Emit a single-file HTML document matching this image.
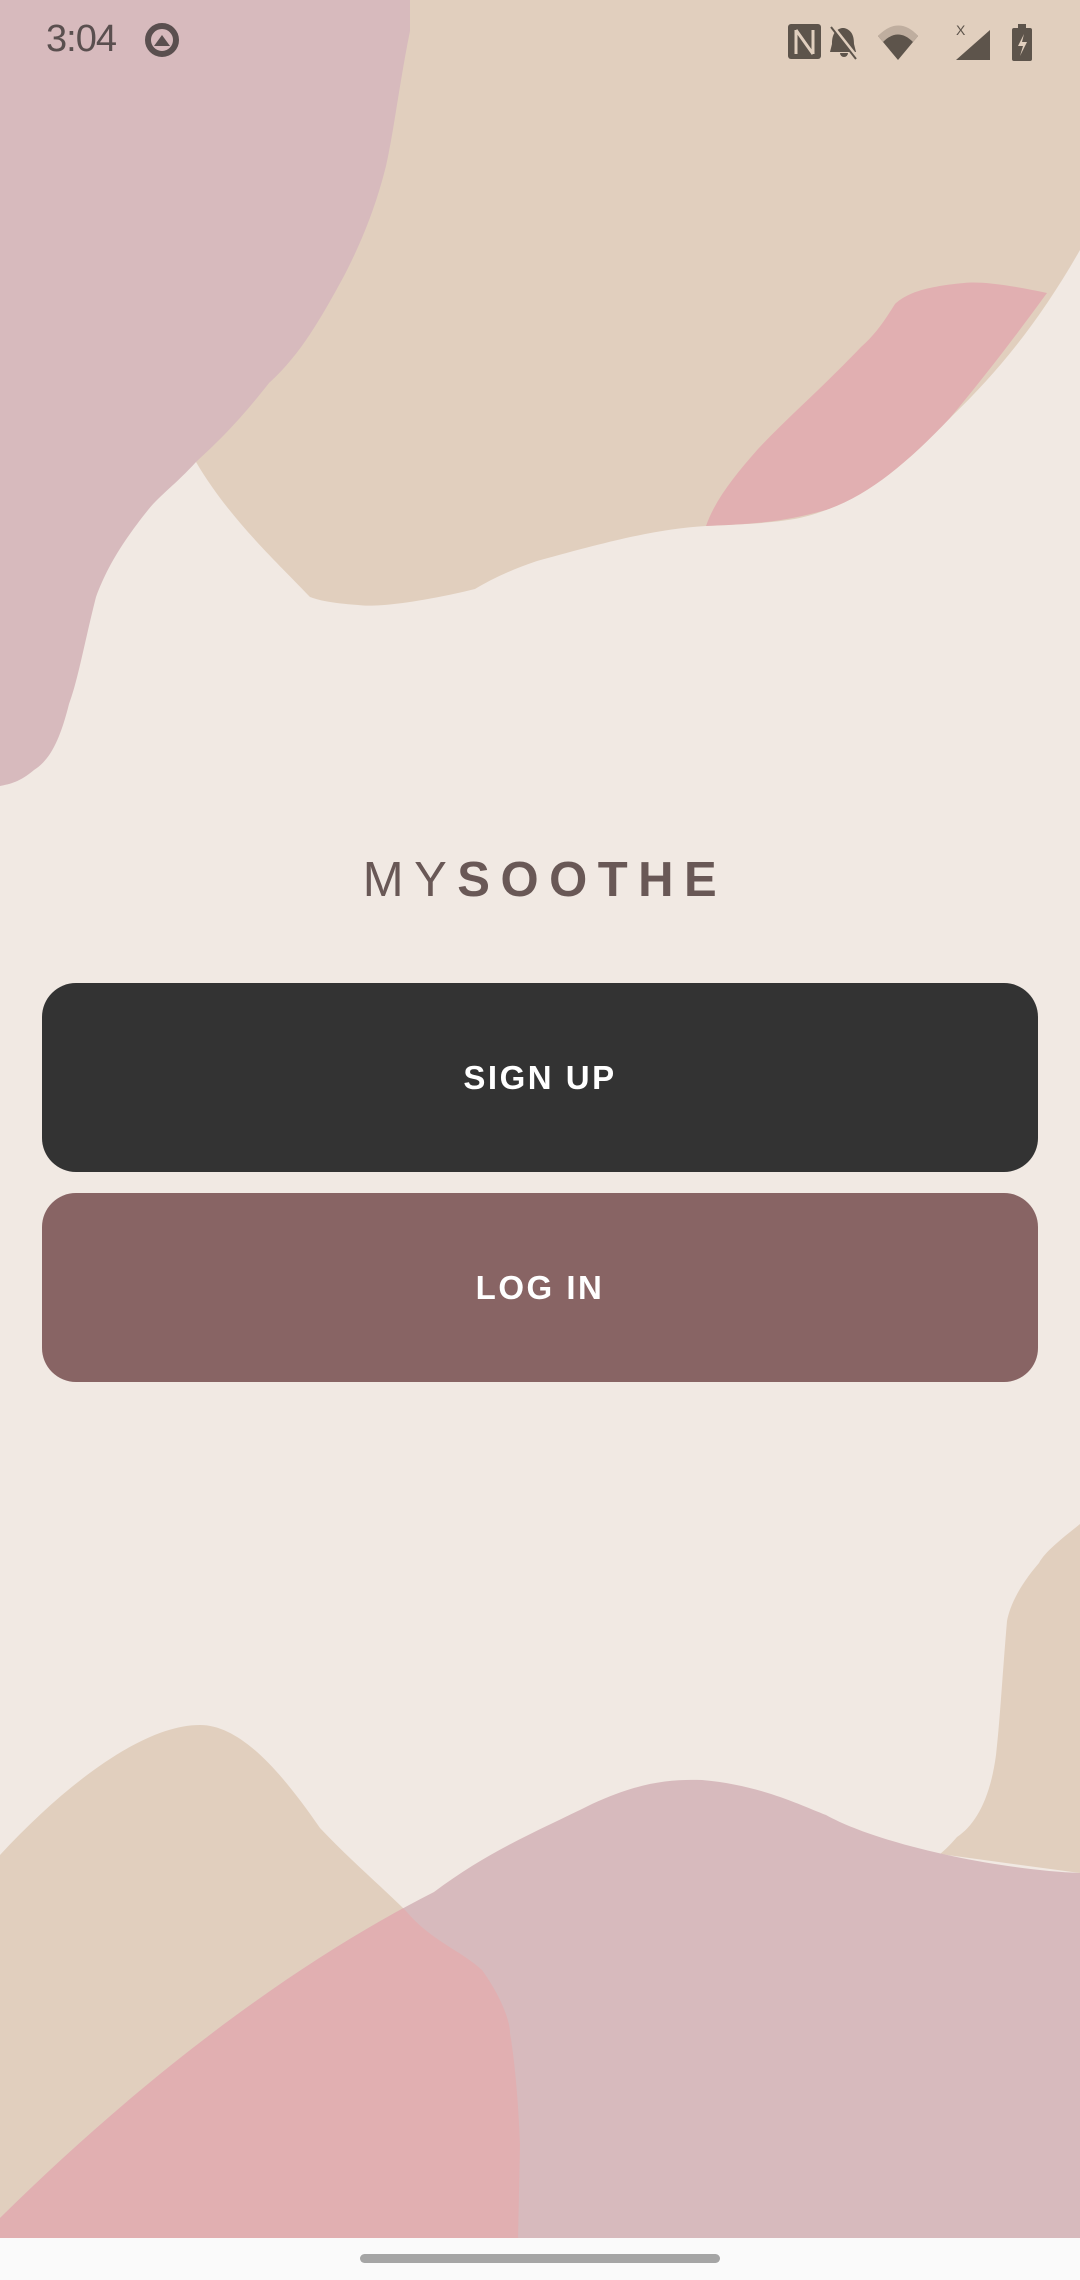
<!DOCTYPE html>
<html><head><meta charset="utf-8"><style>
html,body{margin:0;padding:0;width:1080px;height:2280px;overflow:hidden;background:#f1e9e3;font-family:"Liberation Sans",sans-serif}
svg.bg{position:absolute;left:0;top:0}
.status{position:absolute;top:0;left:0;width:1080px;height:80px}
.time{position:absolute;left:46px;top:18px;font-size:38px;color:#5a4f4f;letter-spacing:-1px}
.logo{position:absolute;left:5px;width:1080px;top:852px;text-align:center;font-size:49px;color:#695856;letter-spacing:10.5px}
.logo .l{font-weight:300}
.logo b{font-weight:700}
.btn{position:absolute;left:42px;width:996px;height:189px;border-radius:34px;color:#fff;font-weight:700;font-size:33px;letter-spacing:2.5px;display:flex;align-items:center;justify-content:center}
.nav{position:absolute;left:0;top:2238px;width:1080px;height:42px;background:#fafafa}
.handle{position:absolute;left:360px;top:2254px;width:360px;height:9px;border-radius:5px;background:#a5a5a5}
</style></head><body>
<svg class="bg" width="1080" height="2280" viewBox="0 0 1080 2280">
<defs>
<clipPath id="mv"><path id="mvp" d="M0,2218 C150,2070 300,1960 434,1892 C490,1850 540,1830 592,1804 C640,1782 670,1779 702,1780 C760,1785 800,1805 826,1815 C880,1845 1000,1870 1080,1873 L1080,2240 L0,2240 Z"/></clipPath>
</defs>
<path d="M410,0 L1080,0 L1080,250 C1040,320 1000,370 950,418 C910,460 870,495 826,510 C800,520 780,523 706,526 C660,529 620,538 537,561 C510,570 490,580 475,589 C430,600 380,608 358,605 C330,603 318,600 310,597 C280,565 230,520 196,462 Z" fill="#e1cfbe"/>
<path d="M1047,293 C1010,285 980,281 964,283 C920,287 905,295 895,304 C885,320 875,335 861,347 C820,390 790,415 758,449 C735,475 715,500 706,526 C750,524 780,523 826,510 C870,495 910,460 950,418 C990,370 1020,330 1047,293 Z" fill="#e1afb1"/>
<path d="M0,0 L410,0 L410,31 C400,80 394,130 386,166 C375,210 360,245 344,276 C320,320 300,355 269,383 C240,420 220,440 196,462 C175,485 160,495 148,510 C120,545 106,570 96,597 C85,640 78,680 69,704 C60,740 50,760 34,770 C20,782 10,784 0,786 Z" fill="#d7babd"/>
<path d="M1080,1524 C1060,1540 1045,1552 1039,1563 C1020,1585 1010,1605 1007,1621 C1002,1680 1000,1720 996,1755 C990,1800 975,1825 957,1837 C950,1845 945,1850 940,1854 L1080,1873 Z" fill="#e1cfbe"/>
<path d="M0,1855 C60,1790 140,1725 200,1725 C240,1725 280,1770 320,1828 C350,1860 380,1885 406,1911 C430,1940 460,1950 482,1970 C500,1995 510,2020 510,2033 C518,2080 520,2144 520,2144 L518,2240 L0,2240 Z" fill="#e1cfbe"/>
<use href="#mvp" fill="#d7babd"/>
<path clip-path="url(#mv)" d="M0,1855 C60,1790 140,1725 200,1725 C240,1725 280,1770 320,1828 C350,1860 380,1885 406,1911 C430,1940 460,1950 482,1970 C500,1995 510,2020 510,2033 C518,2080 520,2144 520,2144 L518,2240 L0,2240 Z" fill="#e1afb1"/>
</svg>
<div class="status">
<div class="time">3:04</div>
<svg style="position:absolute;left:142px;top:20px" width="40" height="40" viewBox="0 0 40 40"><circle cx="20" cy="20" r="14" fill="none" stroke="#5a4f4f" stroke-width="6"/><path d="M12,26 L20,15 L28,26 Z" fill="#5a4f4f"/></svg>
<svg style="position:absolute;left:786px;top:22px" width="250" height="40" viewBox="0 0 250 40">
<rect x="2" y="2" width="33" height="35" rx="3" fill="#5d544b"/><path d="M10,8 L10,32 M10,8 L27,32 M27,8 L27,32" stroke="#e1cfbe" stroke-width="3" fill="none"/>
<path d="M56,6 C48,8 46,14 46,22 L44,30 L70,30 L68,22 C68,14 66,8 58,6 Z M54,31 a4,4 0 0 0 8,0Z" fill="#5d544b"/><path d="M46,4 L72,37" stroke="#e1cfbe" stroke-width="4"/><path d="M45,5 L70,37" stroke="#5d544b" stroke-width="2"/>
<path d="M112,38 L92,14 C105,2 120,2 132,14 Z" fill="#5d544b"/><path d="M92,14 C105,0 120,0 132,14 L127,20 C117,10 107,10 97,20 Z" fill="#bfae9f"/>
<text x="170" y="13" font-size="14" fill="#5d544b" font-family="Liberation Sans">X</text>
<path d="M170,38 L204,8 L204,38 Z" fill="#5d544b"/>
<rect x="226" y="6" width="20" height="33" rx="2" fill="#5d544b"/><rect x="232" y="2" width="8" height="5" fill="#5d544b"/><path d="M238,12 L232,24 L237,24 L234,34 L241,20 L236,20 Z" fill="#e1cfbe"/>
</svg>
</div>
<div class="logo"><span class="l">MY</span><b>SOOTHE</b></div>
<div class="btn" style="top:983px;background:#333333">SIGN UP</div>
<div class="btn" style="top:1193px;background:#886464">LOG IN</div>
<div class="nav"></div><div class="handle"></div>
</body></html>
